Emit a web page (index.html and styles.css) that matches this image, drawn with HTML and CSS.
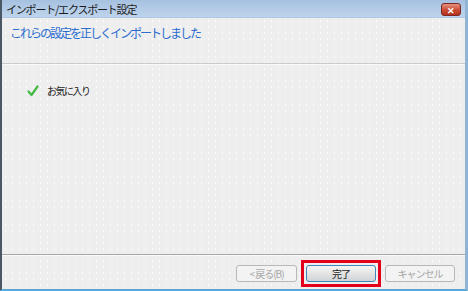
FILE: index.html
```html
<!DOCTYPE html>
<html lang="ja">
<head>
    <meta charset="UTF-8">
    <title>インポート/エクスポート設定</title>
    <link rel="stylesheet" href="styles.css">
</head>
<body>
    <div class="window">
        <div class="titlebar">
            <span class="title-text">インポート/エクスポート設定</span>
            <span class="close-btn">&#x2715;</span>
        </div>
        <div class="header">
            <h1>これらの設定を正しくインポートしました</h1>
        </div>
        <div class="main">
            <div class="item">
                <svg class="check" width="12" height="12" viewBox="0 0 12 12">
                    <path d="M1.5 6.5 L4.5 10 L10.5 1.5" fill="none" stroke="#44bb44" stroke-width="2.2" stroke-linecap="round" stroke-linejoin="round"/>
                </svg>
                <span>お気に入り</span>
            </div>
        </div>
        <div class="footer">
            <button class="btn disabled">&lt;&nbsp;戻る(B)</button>
            <div class="highlight">
                <button class="btn primary">完了</button>
            </div>
            <button class="btn disabled">キャンセル</button>
        </div>
    </div>
</body>
</html>
```

FILE: styles.css
```css
body {
    margin: 0;
    font-family: "Noto Sans CJK JP", "Noto Sans", sans-serif;
}
.window {
    width: 468px;
    height: 291px;
    box-sizing: border-box;
    display: flex;
    flex-direction: column;
    background-color: #eeeeee;
    background-image: radial-gradient(#fafafa 0.6px, transparent 0.8px);
    background-size: 7px 6px;
    border-left: 2px solid #4a5866;
    border-right: 3px solid #8fb4d6;
    border-bottom: 2px solid #5aa8d8;
}
.titlebar {
    height: 17px;
    display: flex;
    align-items: center;
    justify-content: space-between;
    padding: 0 4px 0 4px;
    background: linear-gradient(#a6c1e0, #bed4ec);
    border-bottom: 1px solid #b0c8e2;
}
.title-text {
    font-size: 11px;
    letter-spacing: -1.2px;
    color: #1c1c1c;
}
.close-btn {
    width: 20px;
    height: 13px;
    border-radius: 3px;
    border: 1px solid #7a2a22;
    background: linear-gradient(#e5937f, #c94a34 55%, #b3321f);
    color: #fff;
    font-size: 9px;
    font-weight: bold;
    line-height: 13px;
    text-align: center;
    box-sizing: border-box;
    margin-top: 1px;
}
.header {
    height: 46px;
    padding: 6px 0 0 8px;
    box-sizing: border-box;
    border-bottom: 1px solid #cdc8d0;
    box-shadow: 0 1px 0 #fafafa;
}
h1 {
    margin: 0;
    font-size: 12px;
    font-weight: normal;
    letter-spacing: -2px;
    color: #2a6ccf;
}
.main {
    flex: 1;
    padding: 19px 0 0 25px;
    border-bottom: 1px solid #a8a8a8;
    box-shadow: 0 1px 0 #fafafa;
}
.item {
    display: flex;
    align-items: center;
    gap: 8px;
    font-size: 10px;
    letter-spacing: -1.5px;
    color: #1c1c1c;
}
.footer {
    height: 34px;
    display: flex;
    align-items: center;
    justify-content: flex-end;
    gap: 4px;
    padding: 3px 10px 0 0;
    box-sizing: border-box;
}
.btn {
    height: 17px;
    padding: 0;
    border-radius: 3px;
    font-family: inherit;
    font-size: 10px;
    letter-spacing: -1px;
    box-sizing: border-box;
}
.btn.disabled {
    width: 61px;
    background: #f3f3f3;
    border: 1px solid #b8b8b8;
    color: #a6a6a6;
}
.btn.disabled:last-child {
    width: 70px;
}
.highlight {
    border: 3px solid #e2001b;
    padding: 2px;
}
.btn.primary {
    display: block;
    width: 70px;
    background: linear-gradient(#f6f6f6, #e4e4e4 50%, #cfd3d6);
    border: 1px solid #3d86b8;
    color: #1c1c1c;
}
```
